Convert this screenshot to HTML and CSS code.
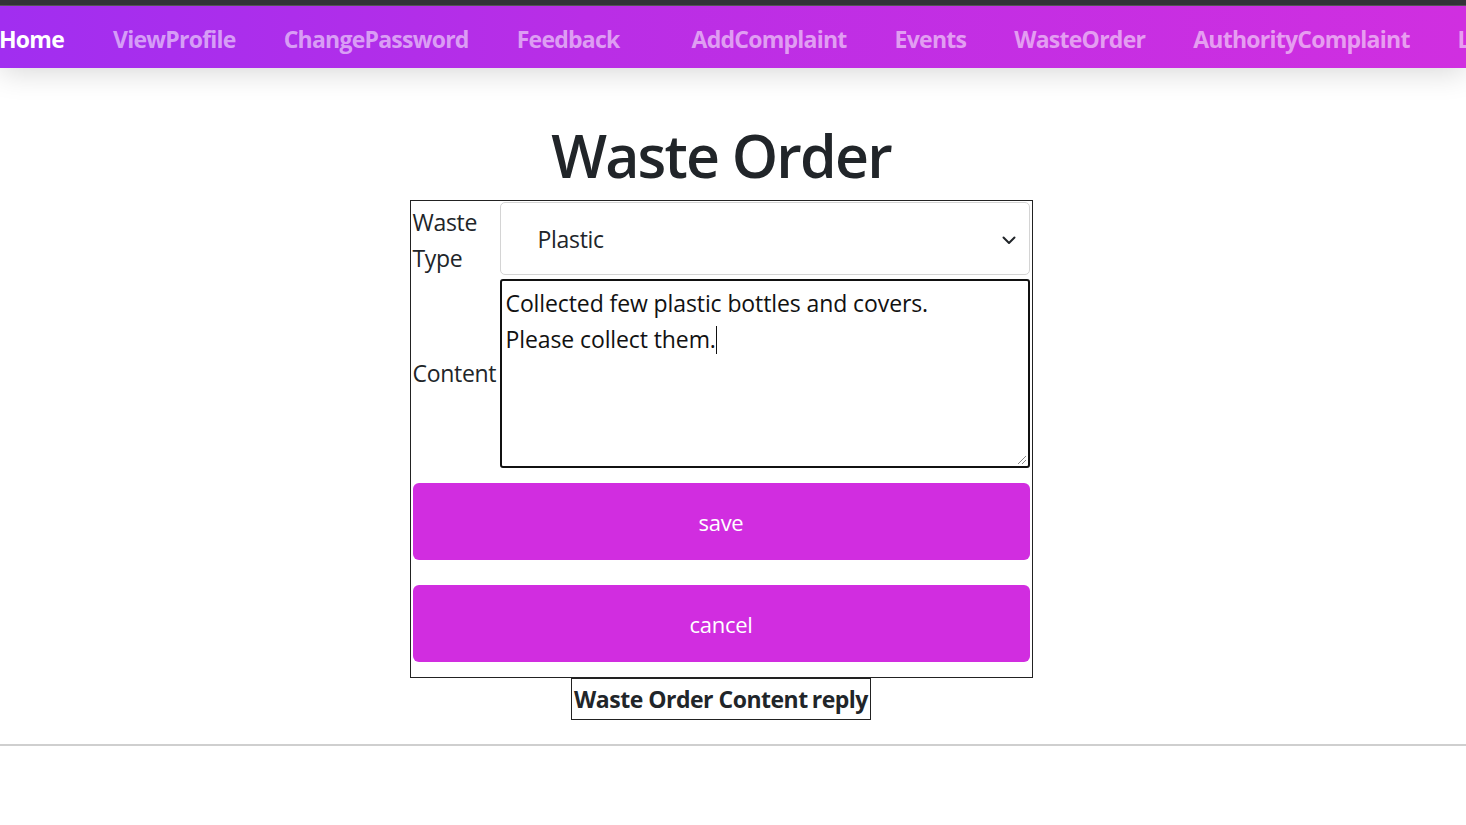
FILE: index.html
```html
<!DOCTYPE html>
<html lang="en">
<head>
<meta charset="utf-8">
<title>Waste Order</title>
<link rel="stylesheet" href="styles.css">
</head>
<body>
<div class="topbar"></div>
<nav class="nav">
  <div class="nav-inner">
    <a class="nav-link active" href="#">Home</a>
    <a class="nav-link" href="#">ViewProfile</a>
    <a class="nav-link" href="#">ChangePassword</a>
    <a class="nav-link wide" href="#">Feedback</a>
    <a class="nav-link" href="#">AddComplaint</a>
    <a class="nav-link" href="#">Events</a>
    <a class="nav-link" href="#">WasteOrder</a>
    <a class="nav-link" href="#">AuthorityComplaint</a>
    <a class="nav-link" href="#">Logout</a>
  </div>
</nav>
<main class="main">
  <h1 class="title">Waste Order</h1>
  <table class="form-table">
    <tr>
      <td class="label first-label">Waste Type</td>
      <td class="field">
        <div class="select">
          <span>Plastic</span>
          <svg class="chev" width="16" height="16" viewBox="0 0 16 16"><path d="M2.5 5.5 8 11l5.5-5.5" fill="none" stroke="#212529" stroke-width="2" stroke-linecap="round" stroke-linejoin="round"/></svg>
        </div>
      </td>
    </tr>
    <tr>
      <td class="label">Content</td>
      <td class="field second">
        <div class="textarea">Collected few plastic bottles and covers.<br>Please collect them.<span class="caret"></span>
          <svg class="grip" width="12" height="12" viewBox="0 0 12 12"><path d="M11 3 3 11M11 7 7 11" stroke="#888" stroke-width="1"/></svg>
        </div>
      </td>
    </tr>
    <tr>
      <td colspan="2" class="btn-cell first"><button class="btn">save</button></td>
    </tr>
    <tr>
      <td colspan="2" class="btn-cell last"><button class="btn">cancel</button></td>
    </tr>
  </table>
  <div class="reply">Waste Order Content<span class="reply-word">reply</span></div>
  <hr class="rule">
</main>
</body>
</html>
```
FILE: styles.css
```css
html, body {
  margin: 0;
  padding: 0;
  background: #fff;
  overflow: hidden;
}
body {
  font-family: "Open Sans", "Noto Sans", sans-serif;
  color: #212529;
  font-size: 24px;
}
.topbar {
  height: 5px;
  background: #35363a;
  border-bottom: 1px solid #5a5a5e;
}
.nav {
  height: 62px;
  background: linear-gradient(90deg, #a12ef0 0%, #b92ee6 40%, #d02fe0 100%);
  overflow: hidden;
  box-shadow: 0 4px 30px rgba(0,0,0,0.16);
  position: relative;
  z-index: 1;
}
.nav-inner {
  display: flex;
  align-items: center;
  height: 100%;
  margin-left: -25px;
  white-space: nowrap;
}
.nav-link {
  flex: none;
  padding: 4px 24px 0;
  font-weight: 700;
  font-size: 23px;
  letter-spacing: -0.75px;
  color: rgba(255,255,255,0.55);
  text-decoration: none;
  line-height: 58px;
}
.nav-link.active { color: #fff; }
.nav-link.wide { padding-right: 48px; }
.nav-link:nth-child(2) { margin-left: 1px; }
.main {
  display: flex;
  flex-direction: column;
  align-items: center;
  padding-top: 52px;
  padding-right: 24px;
}
.title {
  margin: 0 0 10px;
  font-size: 59px;
  font-weight: 600;
  line-height: 70px;
  letter-spacing: -1.8px;
}
.form-table {
  border: 1px solid #222;
  border-collapse: separate;
  border-spacing: 0;
  width: 623px;
}
.form-table td {
  padding: 1px 2px;
  vertical-align: middle;
}
.label {
  width: 84px;
  font-size: 23px;
  line-height: 36px;
  letter-spacing: -0.3px;
}
.form-table td.first-label { padding-top: 3px; padding-bottom: 0; }
.form-table td.field { padding-left: 1px; }
.form-table td.field.second { padding-top: 3px; }
.select {
  height: 71px;
  border: 1px solid #d4d4d4;
  border-radius: 5px;
  display: flex;
  align-items: center;
  justify-content: space-between;
  padding: 0 12px 0 37px;
  font-size: 23px;
  letter-spacing: -0.3px;
}
.chev { margin-top: 2px; }
.textarea {
  position: relative;
  height: 177px;
  border: 2px solid #111;
  border-radius: 3px;
  padding: 4px 4px;
  font-size: 23px;
  line-height: 36px;
  letter-spacing: -0.1px;
  color: #111;
}
.caret {
  display: inline-block;
  width: 1px;
  height: 28px;
  background: #111;
  vertical-align: -6px;
}
.grip {
  position: absolute;
  right: 1px;
  bottom: 1px;
}
.form-table td.btn-cell { padding: 13px 2px 12px; }
.form-table td.btn-cell.first { padding-top: 14px; }
.form-table td.btn-cell.last { padding-bottom: 15px; }
.btn {
  display: block;
  width: 100%;
  height: 77px;
  border: none;
  border-radius: 6px;
  background: #d12de0;
  color: #fff;
  font-family: inherit;
  font-size: 22px;
  letter-spacing: -0.3px;
}
.reply {
  border: 1px solid #222;
  padding: 4px 2px 4px;
  font-weight: 700;
  font-size: 23px;
  letter-spacing: -0.5px;
  line-height: 32px;
}
.reply-word { margin-left: 4px; }
.rule {
  align-self: stretch;
  margin: 24px -24px 0 0;
  border: 0;
  border-top: 2px solid #cfcfcf;
}
```
